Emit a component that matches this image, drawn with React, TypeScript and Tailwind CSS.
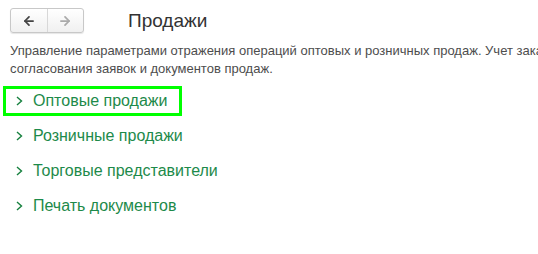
import { ArrowLeft, ArrowRight } from 'lucide-react'

const links = ['Оптовые продажи', 'Розничные продажи', 'Торговые представители', 'Печать документов']

function Chevron() {
  return (
    <svg className="h-[10px] w-[7px] shrink-0" viewBox="0 0 7 10" fill="none">
      <path d="M1 1l4.5 4L1 9" stroke="#16803e" strokeWidth="1.4" />
    </svg>
  )
}

export default function App() {
  return (
    <div className="h-[254px] w-[538px] overflow-hidden bg-white font-[Arial,'Liberation_Sans',sans-serif] text-[#333]">
      <div className="flex items-center pl-[10px] pt-[8px]">
        <div className="flex h-[25px] w-[74px] rounded-[3px] border border-[#c8c8c8] bg-gradient-to-b from-white to-[#f0f0f0] shadow-[0_1px_1px_rgba(0,0,0,0.1)]">
          <div className="flex flex-1 items-center justify-center border-r border-[#d8d8d8]">
            <ArrowLeft className="h-[14px] w-[14px] text-[#444]" strokeWidth={3} />
          </div>
          <div className="flex flex-1 items-center justify-center">
            <ArrowRight className="h-[14px] w-[14px] text-[#aaa]" strokeWidth={3} />
          </div>
        </div>
        <h1 className="ml-[44px] text-[19px] leading-none text-[#333]">Продажи</h1>
      </div>

      <div className="mt-[9px] whitespace-nowrap pl-[10px] text-[13px] leading-[18px] text-[#4d4d4d]">
        <p>Управление параметрами отражения операций оптовых и розничных продаж. Учет заказов клиентов,</p>
        <p>согласования заявок и документов продаж.</p>
      </div>

      <div className="mt-[8px] flex flex-col pl-[3px]">
        {links.map((label, i) => (
          <div
            key={label}
            className={
              'flex items-center gap-[10px] ' +
              (i === 0
                ? 'h-[30px] w-[179px] border-[3px] border-[#00ff00] pl-[10px]'
                : 'mt-[5px] h-[30px] pl-[13px]')
            }
          >
            <Chevron />
            <span className="text-[16px] text-[#1d8a4a]">{label}</span>
          </div>
        ))}
      </div>
    </div>
  )
}
